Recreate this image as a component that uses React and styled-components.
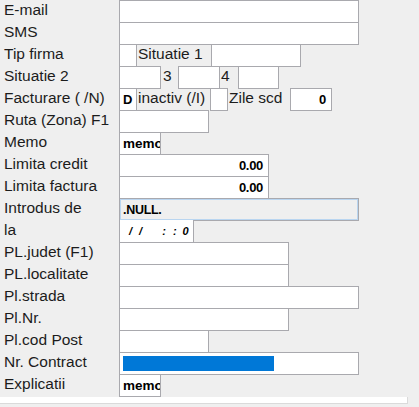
import React from 'react';
import styled, { createGlobalStyle } from 'styled-components';

const GlobalStyle = createGlobalStyle`
  html, body {
    margin: 0;
    padding: 0;
    background: #efefef;
    font-family: "Liberation Sans", Arial, sans-serif;
  }
`;

const Form = styled.div`
  display: flex;
  flex-direction: column;
  width: 419px;
  height: 407px;
  overflow: hidden;
  background: #efefef;
`;

const Row = styled.div`
  display: flex;
  align-items: flex-start;
  height: 22px;
`;

const Label = styled.div`
  width: ${(p) => p.$w || 119}px;
  flex: none;
  box-sizing: border-box;
  padding-left: ${(p) => (p.$pl !== undefined ? p.$pl : 4)}px;
  font-size: 15.5px;
  line-height: 19px;
  color: #1c1c1c;
  white-space: nowrap;
  overflow: hidden;
`;

const Field = styled.div`
  width: ${(p) => p.$w}px;
  height: 23px;
  flex: none;
  box-sizing: border-box;
  border: 1px solid #a9a9ae;
  background: #fff;
  display: flex;
  align-items: center;
  justify-content: ${(p) => (p.$right ? 'flex-end' : 'flex-start')};
  padding: 0 ${(p) => (p.$right ? 5 : 3)}px;
  font-size: 13px;
  font-weight: bold;
  letter-spacing: -0.3px;
  color: #000;
  white-space: nowrap;
  overflow: hidden;
`;

const MemoField = styled(Field)`
  font-size: 13.5px;
  letter-spacing: 0;
  padding-right: 0;
`;

const ReadOnly = styled(Field)`
  background: #efefef;
  box-shadow: inset 0 0 0 1px #b9d5f0;
  padding-left: 3px;
  font-size: 12.5px;
`;

const MaskField = styled(Field)`
  border-top: none;
  border-bottom: none;
  height: 22px;
  font-size: 11px;
  font-style: italic;
  padding-left: 9px;
  letter-spacing: 2px;
`;

const MaskPart = styled.span`
  margin-left: ${(p) => p.$ml || 0}px;
  white-space: pre;
`;

const Progress = styled.div`
  height: 15px;
  background: #0078d7;
`;

const BottomStrip = styled.div`
  margin-top: 1px;
  width: 408px;
  height: 7px;
  box-sizing: border-box;
  background: #fff;
  border-right: 1px solid #dadada;
  border-bottom: 1px solid #dadada;
`;

const App = () => {
  return (
    <>
      <GlobalStyle />
      <Form>
        <Row>
          <Label>E-mail</Label>
          <Field $w={240} />
        </Row>
        <Row>
          <Label>SMS</Label>
          <Field $w={240} />
        </Row>
        <Row>
          <Label>Tip firma</Label>
          <Field $w={18} />
          <Label $w={74} $pl={1}>Situatie 1</Label>
          <Field $w={90} />
        </Row>
        <Row>
          <Label>Situatie 2</Label>
          <Field $w={42} />
          <Label $w={17} $pl={2}>3</Label>
          <Field $w={42} />
          <Label $w={18} $pl={1}>4</Label>
          <Field $w={41} />
        </Row>
        <Row>
          <Label>Facturare ( /N)</Label>
          <Field $w={18}>D</Field>
          <Label $w={73} $pl={1}>inactiv (/I)</Label>
          <Field $w={18} />
          <Label $w={62} $pl={1}>Zile scd</Label>
          <Field $w={42} $right>0</Field>
        </Row>
        <Row>
          <Label>Ruta (Zona) F1</Label>
          <Field $w={90} />
        </Row>
        <Row>
          <Label>Memo</Label>
          <MemoField $w={42}>memo</MemoField>
        </Row>
        <Row>
          <Label>Limita credit</Label>
          <Field $w={150} $right>0.00</Field>
        </Row>
        <Row>
          <Label>Limita factura</Label>
          <Field $w={150} $right>0.00</Field>
        </Row>
        <Row>
          <Label>Introdus de</Label>
          <ReadOnly $w={240}>.NULL.</ReadOnly>
        </Row>
        <Row>
          <Label>la</Label>
          <MaskField $w={75}>
            <MaskPart>{'/ /'}</MaskPart>
            <MaskPart $ml={18}>{': :'}</MaskPart>
            <MaskPart $ml={4}>0</MaskPart>
          </MaskField>
        </Row>
        <Row>
          <Label>PL.judet (F1)</Label>
          <Field $w={170} />
        </Row>
        <Row>
          <Label>PL.localitate</Label>
          <Field $w={170} />
        </Row>
        <Row>
          <Label>Pl.strada</Label>
          <Field $w={240} />
        </Row>
        <Row>
          <Label>Pl.Nr.</Label>
          <Field $w={170} />
        </Row>
        <Row>
          <Label>Pl.cod Post</Label>
          <Field $w={90} />
        </Row>
        <Row>
          <Label>Nr. Contract</Label>
          <Field $w={240}>
            <Progress style={{ width: '151px' }} />
          </Field>
        </Row>
        <Row>
          <Label>Explicatii</Label>
          <MemoField $w={42}>memo</MemoField>
        </Row>
        <BottomStrip />
      </Form>
    </>
  );
};

export default App;
